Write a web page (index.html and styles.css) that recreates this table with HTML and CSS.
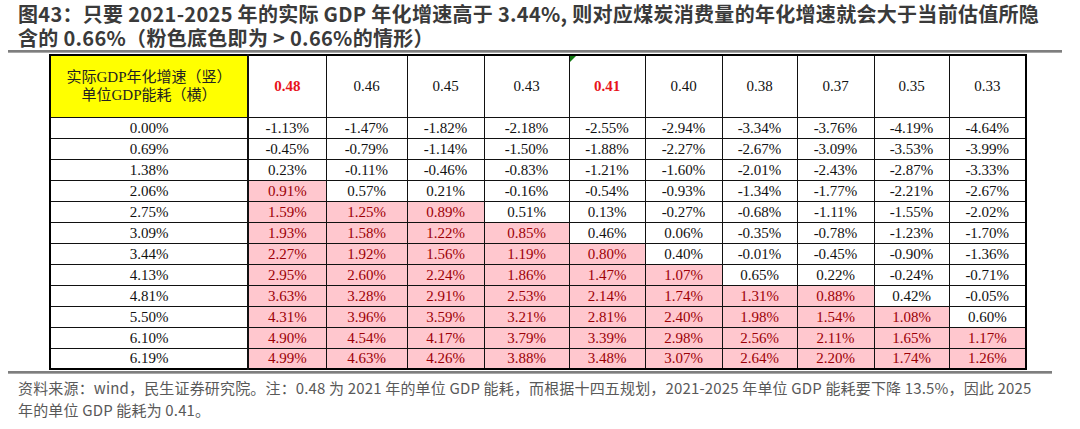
FILE: index.html
```html
<!DOCTYPE html>
<html lang="zh">
<head>
<meta charset="utf-8">
<link rel="stylesheet" href="styles.css">
</head>
<body>
<div class="page">
  <h1 class="title">图43：只要 2021-2025 年的实际 GDP 年化增速高于 3.44%, 则对应煤炭消费量的年化增速就会大于当前估值所隐<br>含的 0.66%（粉色底色即为 &gt; 0.66%的情形）</h1>
  <div class="rule"></div>
  <table class="grid">
    <colgroup>
      <col class="c0"><col class="c1"><col class="c2"><col class="c3"><col class="c4"><col class="c5"><col class="c6"><col class="c7"><col class="c8"><col class="c9"><col class="c10">
    </colgroup>
    <tr class="head">
      <th class="corner">实际GDP年化增速（竖）<br>单位GDP能耗（横）</th>
      <th class="hl">0.48</th>
      <th>0.46</th>
      <th>0.45</th>
      <th>0.43</th>
      <th class="hl flag">0.41<span class="tri"></span></th>
      <th>0.40</th>
      <th>0.38</th>
      <th>0.37</th>
      <th>0.35</th>
      <th>0.33</th>
    </tr>
    <tr><td>0.00%</td><td>-1.13%</td><td>-1.47%</td><td>-1.82%</td><td>-2.18%</td><td>-2.55%</td><td>-2.94%</td><td>-3.34%</td><td>-3.76%</td><td>-4.19%</td><td>-4.64%</td></tr>
    <tr><td>0.69%</td><td>-0.45%</td><td>-0.79%</td><td>-1.14%</td><td>-1.50%</td><td>-1.88%</td><td>-2.27%</td><td>-2.67%</td><td>-3.09%</td><td>-3.53%</td><td>-3.99%</td></tr>
    <tr><td>1.38%</td><td>0.23%</td><td>-0.11%</td><td>-0.46%</td><td>-0.83%</td><td>-1.21%</td><td>-1.60%</td><td>-2.01%</td><td>-2.43%</td><td>-2.87%</td><td>-3.33%</td></tr>
    <tr><td>2.06%</td><td class="p">0.91%</td><td>0.57%</td><td>0.21%</td><td>-0.16%</td><td>-0.54%</td><td>-0.93%</td><td>-1.34%</td><td>-1.77%</td><td>-2.21%</td><td>-2.67%</td></tr>
    <tr><td>2.75%</td><td class="p">1.59%</td><td class="p">1.25%</td><td class="p">0.89%</td><td>0.51%</td><td>0.13%</td><td>-0.27%</td><td>-0.68%</td><td>-1.11%</td><td>-1.55%</td><td>-2.02%</td></tr>
    <tr><td>3.09%</td><td class="p">1.93%</td><td class="p">1.58%</td><td class="p">1.22%</td><td class="p">0.85%</td><td>0.46%</td><td>0.06%</td><td>-0.35%</td><td>-0.78%</td><td>-1.23%</td><td>-1.70%</td></tr>
    <tr><td>3.44%</td><td class="p">2.27%</td><td class="p">1.92%</td><td class="p">1.56%</td><td class="p">1.19%</td><td class="p">0.80%</td><td>0.40%</td><td>-0.01%</td><td>-0.45%</td><td>-0.90%</td><td>-1.36%</td></tr>
    <tr><td>4.13%</td><td class="p">2.95%</td><td class="p">2.60%</td><td class="p">2.24%</td><td class="p">1.86%</td><td class="p">1.47%</td><td class="p">1.07%</td><td>0.65%</td><td>0.22%</td><td>-0.24%</td><td>-0.71%</td></tr>
    <tr><td>4.81%</td><td class="p">3.63%</td><td class="p">3.28%</td><td class="p">2.91%</td><td class="p">2.53%</td><td class="p">2.14%</td><td class="p">1.74%</td><td class="p">1.31%</td><td class="p">0.88%</td><td>0.42%</td><td>-0.05%</td></tr>
    <tr><td>5.50%</td><td class="p">4.31%</td><td class="p">3.96%</td><td class="p">3.59%</td><td class="p">3.21%</td><td class="p">2.81%</td><td class="p">2.40%</td><td class="p">1.98%</td><td class="p">1.54%</td><td class="p">1.08%</td><td>0.60%</td></tr>
    <tr><td>6.10%</td><td class="p">4.90%</td><td class="p">4.54%</td><td class="p">4.17%</td><td class="p">3.79%</td><td class="p">3.39%</td><td class="p">2.98%</td><td class="p">2.56%</td><td class="p">2.11%</td><td class="p">1.65%</td><td class="p">1.17%</td></tr>
    <tr><td>6.19%</td><td class="p">4.99%</td><td class="p">4.63%</td><td class="p">4.26%</td><td class="p">3.88%</td><td class="p">3.48%</td><td class="p">3.07%</td><td class="p">2.64%</td><td class="p">2.20%</td><td class="p">1.74%</td><td class="p">1.26%</td></tr>
  </table>
  <div class="rule rule-bottom"></div>
  <p class="note">资料来源：wind，民生证券研究院。注：0.48 为 2021 年的单位 GDP 能耗，而根据十四五规划，2021-2025 年单位 GDP 能耗要下降 13.5%，因此 2025<br>年的单位 GDP 能耗为 0.41。</p>
</div>
</body>
</html>
```

FILE: styles.css
```css
html, body {
  margin: 0;
  padding: 0;
  background: #ffffff;
}

.page {
  width: 1080px;
  height: 429px;
  overflow: hidden;
}

.title {
  margin: 0;
  padding: 2px 0 0 18px;
  font-family: "Noto Sans CJK SC", "Noto Sans", sans-serif;
  font-weight: 700;
  font-size: 20px;
  line-height: 24px;
  color: #3a3a3a;
  white-space: nowrap;
  letter-spacing: 0.3px;
}

.rule {
  margin: 0 0 0 8px;
  width: 1054px;
  height: 0;
  border-top: 2px solid #7e7e7e;
  border-bottom: 1px solid #a8a8a8;
}

.rule-bottom {
  margin-top: 1px;
  width: 1044px;
}

.grid {
  margin-left: 49px;
  margin-top: 1px;
  border-collapse: collapse;
  table-layout: fixed;
  width: 976px;
  border: 2px solid #000;
  font-family: "Liberation Serif", "Noto Sans CJK SC", serif;
  color: #111;
}

.c0 { width: 198px; }
.c1 { width: 78px; }
.c2 { width: 81px; }
.c3 { width: 77px; }
.c4 { width: 85px; }
.c5 { width: 76px; }
.c6 { width: 77px; }
.c7 { width: 75px; }
.c8 { width: 77px; }
.c9 { width: 75px; }
.c10 { width: 77px; }

.grid th,
.grid td {
  border: 1px solid #111;
  padding: 0;
  text-align: center;
  vertical-align: middle;
}

.grid td:first-child,
.grid th:first-child {
  border-right-width: 2px;
}

.head {
  height: 62px;
}

.grid th {
  font-weight: 400;
  font-size: 15px;
  position: relative;
}

.grid .corner {
  background: #ffff00;
  font-size: 15px;
  line-height: 18px;
  color: #222;
}

.grid .hl {
  color: #e8141b;
  font-weight: 700;
}

.tri {
  position: absolute;
  left: 0;
  top: 0;
  width: 0;
  height: 0;
  border-top: 6px solid #127a12;
  border-right: 6px solid transparent;
}

.grid tr:not(.head) {
  height: 21px;
}

.grid td {
  font-size: 15px;
  line-height: 18px;
}

.grid td.p {
  background: #ffc7ce;
  color: #9c0006;
}

.note {
  margin: 3px 0 0 18px;
  font-family: "Noto Sans CJK SC", "Noto Sans", sans-serif;
  font-size: 15px;
  line-height: 22px;
  color: #595959;
  white-space: nowrap;
  letter-spacing: 0.16px;
}
```
